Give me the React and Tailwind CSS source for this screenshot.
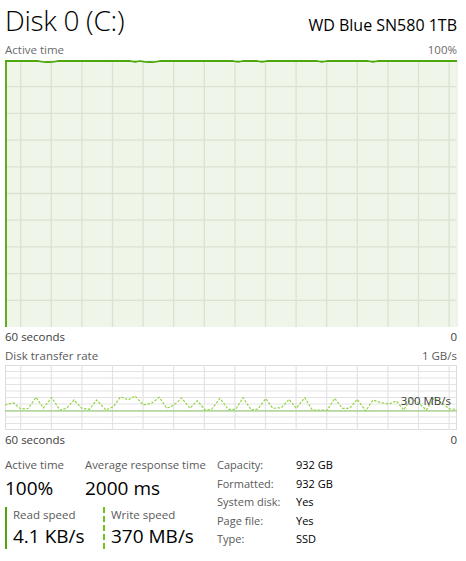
import React from "react";

const GREEN = "#4da60c";

const zz = [
  [5,405],[13.3,402.7],[20.7,409],[28.3,408.3],[36,397.3],[43.3,408],[51.7,397.7],[60,410],[66.7,408.3],[74,400],[81.7,408.3],[89.3,409.3],[96.7,400],[106,410],[113.3,406.7],[120.7,396.7],[128.3,400],[135,396],[143.3,405],[151.7,403.3],[159.3,397.3],[166.7,408.3],[174,405],[181.7,398],[190,408.3],[197.3,400.7],[205,410],[211.7,409.3],[220,398.3],[228.3,409.3],[235.7,409.3],[243,397.7],[251.3,410],[258,409],[265.7,398.7],[273,408.3],[281.3,407.7],[289,399.3],[296.3,408.3],[304.7,397.7],[312.3,410],[319.7,410],[327.3,410],[334.7,398.3],[342.3,408.3],[349.7,408.3],[357.3,399.3],[365.7,411],[373,400],[381.3,402.7],[389,404],[396.3,401],[403.7,410],[411.3,398.3],[419,403.3],[426.3,410],[434,398.3],[442.3,403.3],[449.7,409],[456.3,409.3]
];

const vx = Array.from({ length: 15 }, (_, k) => 15.7 + 30.6 * k);

function ActiveChart() {
  const w = 453, h = 267;
  return (
    <svg width={w} height={h} className="block">
      <rect x="0" y="0" width={w} height={h} fill="#eff6e9" />
      {vx.map((x, i) => (
        <line key={"v" + i} x1={x} y1="0" x2={x} y2={h} stroke="#d9e3d2" strokeWidth="1.3" />
      ))}
      {Array.from({ length: 9 }, (_, i) => (i + 1) * 26.7).map((y, i) => (
        <line key={"h" + i} x1="0" y1={y} x2={w} y2={y} stroke="#d9e3d2" strokeWidth="1.3" />
      ))}
      <rect x={w - 2} y="0" width="2" height={h} fill="#eef1ec" />
      <line x1="1" y1="0" x2="1" y2={h} stroke={GREEN} strokeWidth="1.8" />
      <path
        d="M0 1 L33 1 Q38 2.5 43 2 Q48 2.5 53 1 L125 1 Q130 2.5 135 1 Q140 2.5 145 2 Q150 2.5 155 1 L228 1 Q233 2.5 238 1 L252 1 Q257 2.5 262 1 L312 1 Q317 2.5 322 1 L363 1 Q368 2.5 373 1 L452 1"
        fill="none"
        stroke={GREEN}
        strokeWidth="1.8"
      />
    </svg>
  );
}

function TransferChart() {
  const w = 453, h = 65;
  const pts = zz.map(([x, y]) => `${x - 5},${y - 365}`).join(" ");
  return (
    <svg width={w} height={h} className="block">
      <rect x="0.5" y="0.5" width={w - 2} height={h - 1} fill="#ffffff" stroke="#dcdcdc" />
      {vx.map((x, i) => (
        <line key={"v" + i} x1={x} y1="0" x2={x} y2={h} stroke="#e3e3e3" strokeWidth="1.2" />
      ))}
      {Array.from({ length: 9 }, (_, i) => (i + 1) * 6.5).map((y, i) => (
        <line key={"h" + i} x1="0" y1={y} x2={w - 1} y2={y} stroke="#e3e3e3" strokeWidth="1.2" />
      ))}
      <line x1="0" y1="46" x2={w - 1} y2="46" stroke="#8cc866" strokeWidth="1.2" />
      <polyline points={pts} fill="none" stroke="#94d446" strokeWidth="1.2" strokeDasharray="2.5 1.5" />
    </svg>
  );
}

export default function App() {
  const font = { fontFamily: '"Open Sans", "Noto Sans", sans-serif' };
  return (
    <div
      className="w-[466px] h-[561px] bg-white overflow-hidden pl-[5px] pr-[9px] text-[#1a1a1a]"
      style={font}
    >
      <div className="flex justify-between items-baseline h-[40px]">
        <div className="text-[28px] font-light leading-[40px] text-black tracking-[-0.3px]">Disk 0 (C:)</div>
        <div className="text-[16px] leading-[40px] text-black">WD Blue SN580 1TB</div>
      </div>
      <div className="flex justify-between text-[11.5px] leading-[20px] text-[#6b6b6b] h-[20px]">
        <span>Active time</span>
        <span>100%</span>
      </div>
      <ActiveChart />
      <div className="flex justify-between text-[11.5px] leading-[19px] text-[#3c3c3c] h-[19px]">
        <span>60 seconds</span>
        <span>0</span>
      </div>
      <div className="flex justify-between text-[11.5px] leading-[19px] text-[#5a5a5a] h-[19px]">
        <span>Disk transfer rate</span>
        <span>1 GB/s</span>
      </div>
      <div className="relative">
        <TransferChart />
        <span className="absolute right-[6px] top-[29px] text-[11.5px] leading-[14px] text-[#3c3c3c]">300 MB/s</span>
      </div>
      <div className="flex justify-between text-[11.5px] leading-[19px] text-[#3c3c3c] h-[19px]">
        <span>60 seconds</span>
        <span>0</span>
      </div>
      <div className="flex mt-[7px]">
        <div className="w-[212px] flex flex-col">
          <div className="flex">
            <div className="w-[80px]">
              <div className="text-[11.5px] leading-[18px] text-[#5a5a5a]">Active time</div>
              <div className="text-[19px] leading-[28px] text-black">100%</div>
            </div>
            <div>
              <div className="text-[11.3px] leading-[18px] text-[#5a5a5a]">Average response time</div>
              <div className="text-[19px] leading-[28px] text-black">2000 ms</div>
            </div>
          </div>
          <div className="flex mt-[5px]">
            <div className="w-[98px] border-l-2 border-[#4da60c] pl-[6px]">
              <div className="text-[11.5px] leading-[16px] text-[#5a5a5a]">Read speed</div>
              <div className="text-[19px] leading-[26px] text-black">4.1 KB/s</div>
            </div>
            <div className="border-l-2 border-dashed border-[#6fc31c] pl-[6px]">
              <div className="text-[11.5px] leading-[16px] text-[#5a5a5a]">Write speed</div>
              <div className="text-[19px] leading-[26px] text-black">370 MB/s</div>
            </div>
          </div>
        </div>
        <div className="grid grid-cols-[79px_auto] text-[11px] leading-[18px] pt-[0px]">
          <span className="text-[#5a5a5a]">Capacity:</span><span className="text-black">932 GB</span>
          <span className="text-[#5a5a5a]">Formatted:</span><span className="text-black">932 GB</span>
          <span className="text-[#5a5a5a]">System disk:</span><span className="text-black">Yes</span>
          <span className="text-[#5a5a5a]">Page file:</span><span className="text-black">Yes</span>
          <span className="text-[#5a5a5a]">Type:</span><span className="text-black">SSD</span>
        </div>
      </div>
    </div>
  );
}
